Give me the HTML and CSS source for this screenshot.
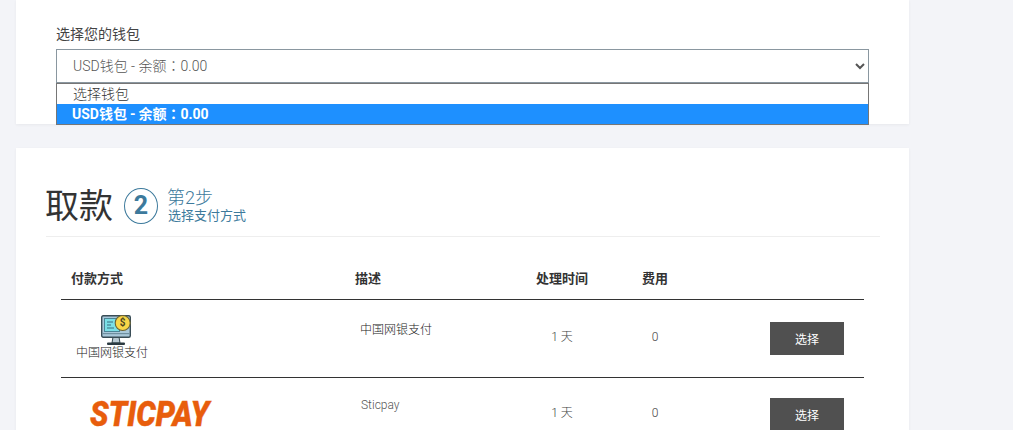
FILE: index.html
```html
<!DOCTYPE html>
<html lang="zh-CN">
<head>
<meta charset="utf-8">
<title>取款</title>
<link rel="stylesheet" href="styles.css">
</head>
<body>
<main class="page">
  <section class="card wallet-card">
    <label class="wallet-label" for="wallet">选择您的钱包</label>
    <div class="select-wrap">
      <select class="wallet-select" id="wallet" lang="zh-TW">
        <option>USD钱包 - 余额：0.00</option>
      </select>
      <ul class="dropdown" lang="zh-TW">
        <li class="dropdown-item">选择钱包</li>
        <li class="dropdown-item selected">USD钱包 - 余额：0.00</li>
      </ul>
    </div>
  </section>

  <section class="card methods-card">
    <header class="step-header">
      <h1 class="step-title">取款</h1>
      <span class="step-badge">2</span>
      <div class="step-text">
        <div class="step-num">第2步</div>
        <div class="step-desc">选择支付方式</div>
      </div>
    </header>

    <table class="methods">
      <thead>
        <tr>
          <th class="col-method">付款方式</th>
          <th class="col-desc">描述</th>
          <th class="col-time">处理时间</th>
          <th class="col-fee">费用</th>
          <th class="col-action"></th>
        </tr>
      </thead>
      <tbody>
        <tr class="row-bank">
          <td class="method-cell">
            <div class="method-logo">
              <svg class="bank-icon" width="32" height="31" viewBox="0 0 32 31" aria-hidden="true">
                <path d="M12 22h6l1 6h-8z" fill="#b9c9d2" stroke="#33474f" stroke-width="1"/>
                <rect x="6" y="27.5" width="18" height="2.5" rx="1" fill="#2b3a41"/>
                <rect x="0.7" y="0.7" width="28.6" height="21.6" rx="1.5" fill="#a9c8da" stroke="#3a4d56" stroke-width="1.4"/>
                <rect x="3.5" y="3.5" width="15" height="13" fill="#7adfe6" stroke="#4a8596" stroke-width="1"/>
                <path d="M6 7h6M6 10h4M6 13h7" stroke="#3a6f80" stroke-width="1.1" fill="none"/>
                <rect x="1.5" y="18" width="27" height="1.2" fill="#6f8fa0"/>
                <circle cx="21.7" cy="8" r="7.5" fill="#f8d648" stroke="#6a6234" stroke-width="1.1"/>
                <text class="coin-sign" x="21.7" y="11.4" text-anchor="middle">$</text>
              </svg>
              <span class="method-name">中国网银支付</span>
            </div>
          </td>
          <td class="desc-cell"><span class="desc-text">中国网银支付</span></td>
          <td class="time-cell">1 天</td>
          <td class="fee-cell">0</td>
          <td class="action-cell"><button class="select-btn" type="button">选择</button></td>
        </tr>
        <tr class="row-sticpay">
          <td class="method-cell"><span class="sticpay-logo">STICPAY</span></td>
          <td class="desc-cell"><span class="desc-text">Sticpay</span></td>
          <td class="time-cell">1 天</td>
          <td class="fee-cell">0</td>
          <td class="action-cell"><button class="select-btn" type="button">选择</button></td>
        </tr>
      </tbody>
    </table>
  </section>
</main>
</body>
</html>
```
FILE: styles.css
```css
* { box-sizing: border-box; }
html, body {
  margin: 0;
  height: 430px;
  overflow: hidden;
  background: #f3f4f8;
}
body {
  font-family: Roboto, "Noto Sans CJK SC", sans-serif;
  color: #333;
}
.page {
  width: 893px;
  margin-left: 16px;
  display: flex;
  flex-direction: column;
  gap: 24px;
}
.card {
  background: #fff;
  box-shadow: 0 1px 3px rgba(0, 0, 0, 0.05);
}
.wallet-card {
  height: 124px;
  padding: 26px 40px 0;
}
.wallet-label {
  display: block;
  height: 23px;
  font-size: 14px;
  line-height: 17px;
  font-weight: 400;
  color: #444;
}
.select-wrap {
  position: relative;
  width: 813px;
}
.wallet-select {
  display: block;
  width: 100%;
  height: 34px;
  padding: 0 12px;
  border: 1px solid #8a97a0;
  border-radius: 0;
  background: #fff;
  font: 300 14px Roboto, "Noto Sans CJK TC", sans-serif;
  color: #555;
  outline: 0;
}
.dropdown {
  position: absolute;
  top: 34px;
  left: 0;
  right: 0;
  margin: 0;
  padding: 0;
  list-style: none;
  background: #fff;
  border: 1px solid #767676;
  z-index: 2;
}
.dropdown-item {
  height: 20px;
  padding-left: 15px;
  font-size: 14px;
  line-height: 20px;
  font-weight: 300;
  color: #333;
  font-family: Roboto, "Noto Sans CJK TC", sans-serif;
}
.dropdown-item:first-child { padding-left: 16px; }
.dropdown-item.selected {
  background: #1e90ff;
  color: #fff;
  font-weight: 700;
  word-spacing: -0.5px;
}
.methods-card {
  height: 320px;
  padding: 0 29px 0 30px;
}
.step-header {
  display: flex;
  align-items: center;
  height: 89px;
  padding-top: 27px;
  border-bottom: 1px solid #eee;
}
.step-title {
  margin: 0 11px 0 -1px;
  font-size: 34px;
  font-weight: 400;
  line-height: 44px;
  color: #333;
}
.step-badge {
  width: 34px;
  height: 36px;
  border: 1px solid #3d7a9c;
  border-radius: 50%;
  display: flex;
  align-items: center;
  justify-content: center;
  font-size: 25px;
  font-weight: 700;
  color: #3d7a9c;
}
.step-text {
  margin-left: 10px;
  color: #3d7a9c;
}
.step-num {
  font-size: 18px;
  line-height: 21px;
  font-weight: 300;
  margin-left: -1px;
}
.step-desc {
  font-size: 13px;
  line-height: 16px;
  font-weight: 400;
}
.methods {
  margin: 19px 0 0 15px;
  width: 803px;
  border-collapse: collapse;
  table-layout: fixed;
}
.methods th {
  height: 43px;
  padding: 0;
  font-size: 13px;
  font-weight: 700;
  color: #333;
  text-align: left;
  border-bottom: 1px solid #333;
}
.methods th.col-method { width: 284px; padding-left: 10px; }
.methods th.col-desc { width: 157px; padding-left: 10px; }
.methods th.col-time { width: 120px; text-align: center; }
.methods th.col-fee { width: 66px; text-align: center; }
.row-bank td {
  height: 78px;
  border-bottom: 1px solid #333;
}
.row-sticpay td { height: 74px; }
.methods td {
  padding: 0;
  font-size: 12px;
  line-height: 16px;
  font-weight: 300;
  color: #444;
}
.methods td.method-cell { vertical-align: top; }
.method-logo {
  width: 102px;
  padding-top: 15px;
  display: flex;
  flex-direction: column;
  align-items: center;
}
.bank-icon { display: block; margin-left: 10px; }
.coin-sign {
  font: 700 10px Roboto, sans-serif;
  fill: #4a4520;
}
.method-name {
  font-size: 12px;
  line-height: 14px;
  white-space: nowrap;
  color: #222;
  font-weight: 300;
}
.sticpay-logo {
  display: block;
  margin: 22px 0 0 29px;
  font: italic 900 35px/30px Roboto, sans-serif;
  color: #e85d0c;
  -webkit-text-stroke: 0.4px #e85d0c;
  transform: scaleX(0.875);
  transform-origin: left center;
}
.methods td.desc-cell { vertical-align: top; padding: 23px 0 0 15px; color: #222; }
.desc-text { font-size: 12px; line-height: 15px; display: block; }
.methods .row-sticpay td.desc-cell { padding: 20px 0 0 16px; }
.row-sticpay .desc-text { color: #555; }
.methods td.time-cell { text-align: center; padding-bottom: 2px; }
.methods td.fee-cell { text-align: center; padding-bottom: 2px; }
.methods td.action-cell { text-align: right; padding-right: 20px; }
.select-btn {
  width: 74px;
  height: 33px;
  border: 0;
  background: #505050;
  color: #fff;
  font: 400 12px Roboto, "Noto Sans CJK SC", sans-serif;
  vertical-align: middle;
}
```
